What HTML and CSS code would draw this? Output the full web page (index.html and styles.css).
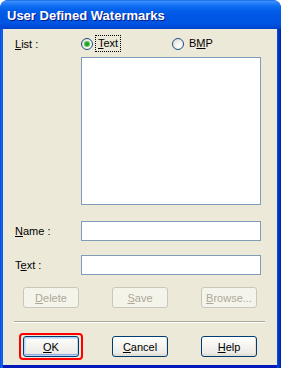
FILE: index.html
```html
<!DOCTYPE html>
<html lang="en">
<head>
    <meta charset="UTF-8">
    <title>User Defined Watermarks</title>
    <link rel="stylesheet" href="styles.css">
</head>
<body>
    <div class="window">
        <!-- Title Bar -->
        <div class="titlebar">
            <span class="title">User Defined Watermarks</span>
        </div>

        <div class="client">
            <div class="row top-row">
                <span class="label"><u>L</u>ist :</span>
                <div class="radios">
                    <label class="radio radio-first">
                        <span class="circle checked"></span>
                        <span class="radio-label focus"><u>T</u>ext</span>
                    </label>
                    <label class="radio">
                        <span class="circle"></span>
                        <span class="radio-label">B<u>M</u>P</span>
                    </label>
                </div>
            </div>

            <div class="listbox"></div>

            <div class="row field name-row">
                <span class="label"><u>N</u>ame :</span>
                <div class="input"></div>
            </div>
            <div class="row field text-row">
                <span class="label">T<u>e</u>xt :</span>
                <div class="input"></div>
            </div>

            <div class="buttons edit-buttons">
                <button class="btn" disabled><u>D</u>elete</button>
                <button class="btn" disabled><u>S</u>ave</button>
                <button class="btn" disabled><u>B</u>rowse...</button>
            </div>

            <div class="separator"></div>

            <div class="buttons dialog-buttons">
                <button class="btn default"><u>O</u>K</button>
                <button class="btn"><u>C</u>ancel</button>
                <button class="btn"><u>H</u>elp</button>
            </div>
        </div>
    </div>
</body>
</html>
```

FILE: styles.css
```css
body {
    margin: 0;
    padding: 0;
    font-family: "Liberation Sans", Arial, sans-serif;
    font-size: 11px;
    color: #000;
    background: #fff;
}

/* Window frame */
.window {
    width: 281px;
    height: 368px;
    box-sizing: border-box;
    background: linear-gradient(to right, #0831d9 0, #166aee 1px, #0055e5 3px, #0055e5 277px, #0040d0 278px, #001ea0 281px);
    border-radius: 8px 8px 0 0;
    overflow: hidden;
    display: flex;
    flex-direction: column;
}

.titlebar {
    height: 29px;
    flex: none;
    box-sizing: border-box;
    padding: 8px 0 0 7px;
    background: linear-gradient(to bottom, #0a58e0 0, #3d92fb 1px, #2a83fb 3px, #0f6ef3 6px, #0360ea 10px, #0057e5 15px, #0055e3 23px, #0049d6 27px, #0042c8 29px);
    border-radius: 8px 8px 0 0;
}

.title {
    color: #fff;
    font-weight: bold;
    font-size: 13px;
    line-height: 16px;
    text-shadow: 1px 1px 0 #0a1883;
}

.client {
    background: #ece9d8;
    margin: 0 4px 3px 3px;
    flex: 1;
    padding: 6px 0 0 12px;
    box-shadow: 0 3px 0 #0019b8;
}

/* Form rows */
.row {
    display: grid;
    grid-template-columns: 66px 180px;
    align-items: center;
}

.top-row {
    height: 16px;
}

.label u, .radio-label u, .btn u {
    text-decoration: underline;
}

.radios {
    display: flex;
    align-items: center;
}

.radio {
    display: flex;
    align-items: center;
}

.radio-first {
    width: 91px;
}

.circle {
    width: 12px;
    height: 12px;
    box-sizing: border-box;
    border: 1px solid #1c5180;
    border-radius: 50%;
    background: radial-gradient(circle at 70% 70%, #ffffff 0, #f4f3ee 40%, #dcd9ce 100%);
    display: flex;
    align-items: center;
    justify-content: center;
}

.circle.checked::after {
    content: "";
    width: 4px;
    height: 4px;
    border-radius: 50%;
    background: #21a121;
    box-shadow: 0 0 0 1px #56c956;
}

.radio-label {
    margin-left: 2px;
    padding: 1px 2px;
    line-height: 13px;
    border: 1px solid transparent;
}

.radio-label.focus {
    border: 1px dotted #000;
}

.listbox {
    margin: 6px 0 0 66px;
    width: 180px;
    height: 148px;
    box-sizing: border-box;
    border: 1px solid #7f9db9;
    background: #fff;
}

.field {
    height: 20px;
}

.name-row {
    margin-top: 16px;
}

.text-row {
    margin-top: 14px;
}

.input {
    height: 20px;
    box-sizing: border-box;
    border: 1px solid #7f9db9;
    background: #fff;
}

/* Buttons */
.buttons {
    display: flex;
    gap: 33px;
    padding-left: 8px;
}

.edit-buttons {
    margin-top: 12px;
}

.dialog-buttons {
    margin-top: 13px;
}

.btn {
    width: 56px;
    height: 21px;
    padding: 0;
    font-family: "Liberation Sans", Arial, sans-serif;
    font-size: 11px;
    color: #000;
    border: 1px solid #003c74;
    border-radius: 3px;
    background: linear-gradient(to bottom, #ffffff 0, #f6f5f1 40%, #ecebe6 85%, #d6d0c5 100%);
    box-shadow: inset -1px -1px 0 #e3e0d4;
    position: relative;
}

.btn:disabled {
    color: #aca899;
    border-color: #c9c7ba;
    background: #f5f4ea;
    box-shadow: none;
}

.btn.default {
    box-shadow: inset 0 0 0 1px #bcd4f6, inset 0 -2px 0 #89ade4, inset 1px 1px 0 1px #cee7ff;
}

/* red highlight round the OK button */
.btn.default::after {
    content: "";
    position: absolute;
    left: -5px;
    top: -4px;
    right: -5px;
    bottom: -4px;
    border: 2px solid #ff0000;
    border-radius: 4px;
}

.separator {
    margin: 13px 0 0 -1px;
    width: 251px;
    border-top: 1px solid #aca899;
    border-bottom: 1px solid #ffffff;
}
```
